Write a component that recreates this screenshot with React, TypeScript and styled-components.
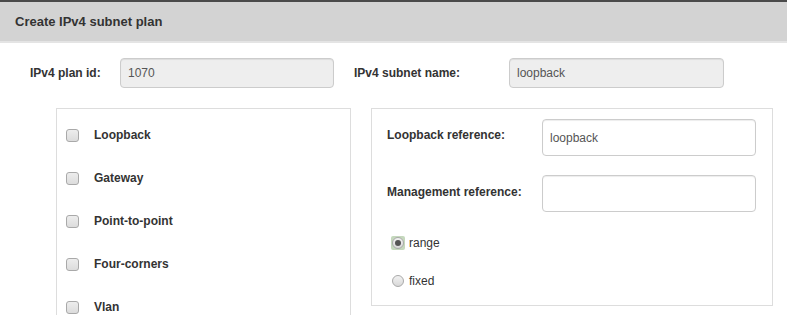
import React from "react";
import styled, { createGlobalStyle } from "styled-components";

const Global = createGlobalStyle`
  html, body { margin: 0; padding: 0; background: #fff; overflow: hidden; }
  body { font-family: "Liberation Sans", Arial, sans-serif; color: #333; font-size: 12px; }
`;

const Page = styled.div`
  width: 787px;
  height: 315px;
  overflow: hidden;
`;

const Header = styled.div`
  height: 39px;
  border-top: 2px solid #4a4a4a;
  border-bottom: 2px solid #e4e4e4;
  background: #d3d3d3;
  display: flex;
  align-items: center;
  padding-left: 15px;
  font-size: 13px;
  font-weight: bold;
  color: #333;
`;

const TopRow = styled.div`
  display: flex;
  align-items: center;
  padding: 15px 0 0 30px;
  height: 29px;
`;

const Label = styled.label<{ $w: number; $raise?: number }>`
  width: ${(p) => p.$w}px;
  font-weight: bold;
  font-size: 12px;
  color: #333;
  flex-shrink: 0;
  margin-bottom: ${(p) => (p.$raise ?? 0) * 2}px;
`;

const Input = styled.div<{ $readonly?: boolean; $w: number; $h: number }>`
  box-sizing: border-box;
  width: ${(p) => p.$w}px;
  height: ${(p) => p.$h}px;
  border: 1px solid #ccc;
  border-radius: 4px;
  background: ${(p) => (p.$readonly ? "#eee" : "#fff")};
  box-shadow: inset 0 1px 1px rgba(0, 0, 0, 0.075);
  display: flex;
  align-items: center;
  padding: 0 7px;
  font-size: 12px;
  color: #555;
  flex-shrink: 0;
`;

const Gap = styled.div<{ $w: number }>`
  width: ${(p) => p.$w}px;
  flex-shrink: 0;
`;

const Panels = styled.div`
  display: flex;
  align-items: flex-start;
  padding: 21px 0 0 56px;
  gap: 20px;
`;

const Panel = styled.div<{ $w: number; $h: number }>`
  box-sizing: border-box;
  width: ${(p) => p.$w}px;
  height: ${(p) => p.$h}px;
  border: 1px solid #ddd;
  background: #fff;
`;

const CheckList = styled.div`
  display: flex;
  flex-direction: column;
  padding: 19px 0 0 9px;
`;

const CheckRow = styled.div`
  display: flex;
  align-items: center;
  height: 14px;
  margin-bottom: 29px;
`;

const Box = styled.span`
  box-sizing: border-box;
  width: 13px;
  height: 13px;
  border: 1px solid #a9a9a9;
  border-radius: 3px;
  background: linear-gradient(#ededed, #dcdcdc);
  margin-right: 15px;
  flex-shrink: 0;
`;

const CheckLabel = styled.span`
  font-weight: bold;
  font-size: 12px;
  color: #333;
`;

const RightBody = styled.div`
  display: flex;
  flex-direction: column;
  padding: 10px 0 0 15px;
`;

const FieldRow = styled.div<{ $mb: number }>`
  display: flex;
  align-items: center;
  margin-bottom: ${(p) => p.$mb}px;
`;

const RadioRow = styled.div`
  display: flex;
  align-items: center;
  padding-left: 5px;
  height: 14px;
  margin-bottom: 24px;
`;

const RadioFocus = styled.span<{ $focus?: boolean }>`
  box-sizing: border-box;
  width: 14px;
  height: 14px;
  display: flex;
  align-items: center;
  justify-content: center;
  border-radius: 2px;
  background: ${(p) => (p.$focus ? "#c5d8bd" : "transparent")};
  margin-left: -1px;
  margin-right: 4px;
`;

const Radio = styled.span<{ $checked?: boolean }>`
  box-sizing: border-box;
  width: 12px;
  height: 12px;
  border-radius: 50%;
  border: 1px solid #a9a9a9;
  background: linear-gradient(#f2f2f2, #d8d8d8);
  display: flex;
  align-items: center;
  justify-content: center;
  &::after {
    content: "";
    display: ${(p) => (p.$checked ? "block" : "none")};
    width: 6px;
    height: 6px;
    border-radius: 50%;
    background: #555;
  }
`;

const RadioLabel = styled.span`
  font-size: 12px;
  color: #333;
`;

const checks = ["Loopback", "Gateway", "Point-to-point", "Four-corners", "Vlan"];

export default function App() {
  return (
    <Page>
      <Global />
      <Header>Create IPv4 subnet plan</Header>
      <TopRow>
        <Label $w={90}>IPv4 plan id:</Label>
        <Input $readonly $w={214} $h={30}>1070</Input>
        <Gap $w={20} />
        <Label $w={155}>IPv4 subnet name:</Label>
        <Input $readonly $w={215} $h={30}>loopback</Input>
      </TopRow>
      <Panels>
        <Panel $w={295} $h={230}>
          <CheckList>
            {checks.map((c) => (
              <CheckRow key={c}>
                <Box />
                <CheckLabel>{c}</CheckLabel>
              </CheckRow>
            ))}
          </CheckList>
        </Panel>
        <Panel $w={402} $h={198}>
          <RightBody>
            <FieldRow $mb={19}>
              <Label $w={155} $raise={3}>Loopback reference:</Label>
              <Input $w={214} $h={37}>loopback</Input>
            </FieldRow>
            <FieldRow $mb={24}>
              <Label $w={155} $raise={2}>Management reference:</Label>
              <Input $w={214} $h={37} />
            </FieldRow>
            <RadioRow>
              <RadioFocus $focus>
                <Radio $checked />
              </RadioFocus>
              <RadioLabel>range</RadioLabel>
            </RadioRow>
            <RadioRow>
              <RadioFocus>
                <Radio />
              </RadioFocus>
              <RadioLabel>fixed</RadioLabel>
            </RadioRow>
          </RightBody>
        </Panel>
      </Panels>
    </Page>
  );
}
